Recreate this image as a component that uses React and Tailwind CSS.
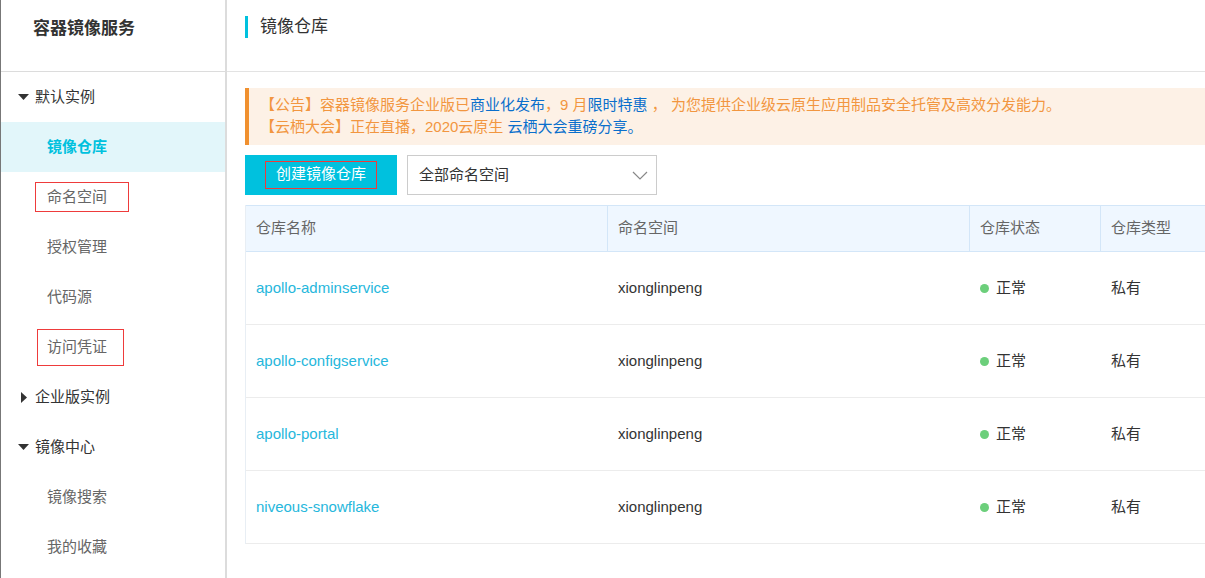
import React from 'react';

const font = { fontFamily: '"Liberation Sans", "Noto Sans CJK SC", sans-serif' };

const repos = [
  { name: 'apollo-adminservice', ns: 'xionglinpeng' },
  { name: 'apollo-configservice', ns: 'xionglinpeng' },
  { name: 'apollo-portal', ns: 'xionglinpeng' },
  { name: 'niveous-snowflake', ns: 'xionglinpeng' },
];

const CaretDown = () => (
  <svg width="11" height="6" viewBox="0 0 11 6" className="mr-[6px]">
    <path d="M0 0 L11 0 L5.5 6 Z" fill="#333" />
  </svg>
);

const CaretRight = () => (
  <svg width="6" height="11" viewBox="0 0 6 11" className="ml-[3px] mr-[8px]">
    <path d="M0 0 L6 5.5 L0 11 Z" fill="#333" />
  </svg>
);

const Group = ({ open, label }) => (
  <div className="h-[50px] flex items-center pl-[17px] text-[15px] text-[#333]">
    {open ? <CaretDown /> : <CaretRight />}
    <span>{label}</span>
  </div>
);

const Item = ({ children, active }) => (
  <div
    className={
      'h-[50px] flex items-center pl-[46px] text-[15px] ' +
      (active ? 'bg-[#e2f6fa] text-[#00c1de] font-bold' : 'text-[#666]')
    }
  >
    {children}
  </div>
);

export default function App() {
  return (
    <div className="flex w-[1205px] h-[578px] overflow-hidden bg-white" style={font}>
      {/* sidebar */}
      <div className="w-[227px] shrink-0 border-l border-l-[#777] border-r-2 border-r-[#dcdcdc] flex flex-col">
        <div className="h-[72px] shrink-0 border-b border-[#dcdcdc] flex items-center pl-[32px] pb-[14px]">
          <span className="text-[17px] font-bold text-[#333]">容器镜像服务</span>
        </div>
        <Group open label="默认实例" />
        <Item active>镜像仓库</Item>
        <Item>
          <span className="-ml-[12px] pl-[11px] pr-[21px] h-[30px] flex items-center border border-[#ee3b3b]">命名空间</span>
        </Item>
        <Item>授权管理</Item>
        <Item>代码源</Item>
        <Item>
          <span className="-ml-[10px] pl-[9px] pr-[16px] h-[37px] flex items-center border border-[#ee3b3b]">访问凭证</span>
        </Item>
        <Group label="企业版实例" />
        <Group open label="镜像中心" />
        <Item>镜像搜索</Item>
        <Item>我的收藏</Item>
      </div>

      {/* main */}
      <div className="flex-1 overflow-hidden">
        <div className="h-[72px] border-b border-[#e3e3e3] pt-[16px] pl-[18px] w-[1200px]">
          <div className="flex items-center border-l-[3px] border-[#00c1de] h-[22px] pl-[12px]">
            <span className="text-[17px] text-[#333]">镜像仓库</span>
          </div>
        </div>

        <div className="pl-[18px] pt-[16px] w-[1200px]">
          <div className="h-[57px] bg-[#fdf1e6] border-l-4 border-[#f0902f] pl-[11px] pt-[6px] text-[15px] leading-[22px] text-[#f29640] whitespace-nowrap">
            <div>
              【公告】容器镜像服务企业版已<span className="text-[#0a6fcc]">商业化发布</span>，9 月<span className="text-[#0a6fcc]">限时特惠</span> ， 为您提供企业级云原生应用制品安全托管及高效分发能力。
            </div>
            <div>
              【云栖大会】正在直播，2020云原生 <span className="text-[#0a6fcc]">云栖大会重磅分享。</span>
            </div>
          </div>

          <div className="flex gap-[10px] mt-[10px]">
            <button className="w-[152px] h-[40px] bg-[#00c1de] flex items-center justify-center">
              <span className="h-[28px] px-[10px] flex items-center border border-[#ee3b3b] text-white text-[15px] -mt-[1px]">创建镜像仓库</span>
            </button>
            <div className="w-[250px] h-[40px] border border-[#cccccc] flex items-center justify-between pl-[11px] pr-[8px]">
              <span className="text-[15px] text-[#333]">全部命名空间</span>
              <svg width="16" height="9" viewBox="0 0 16 9">
                <path d="M1 1 L8 8 L15 1" fill="none" stroke="#888" strokeWidth="1.2" />
              </svg>
            </div>
          </div>

          <div className="mt-[10px] border-l border-[#e8eef4] w-[1100px]">
            <div className="flex h-[47px] bg-[#eff7ff] border border-l-0 border-[#d3e6f8] text-[15px] text-[#666]">
              <div className="w-[362px] border-r border-[#d3e6f8] flex items-center pl-[10px]">仓库名称</div>
              <div className="w-[362px] border-r border-[#d3e6f8] flex items-center pl-[10px]">命名空间</div>
              <div className="w-[131px] border-r border-[#d3e6f8] flex items-center pl-[10px]">仓库状态</div>
              <div className="w-[131px] border-r border-[#d3e6f8] flex items-center pl-[10px]">仓库类型</div>
              <div className="flex-1"></div>
            </div>
            {repos.map((r) => (
              <div key={r.name} className="flex h-[73px] border-b border-[#ececec] text-[15px]">
                <div className="w-[362px] flex items-center pl-[10px] text-[#26b7dc]">{r.name}</div>
                <div className="w-[362px] flex items-center pl-[10px] text-[#333]">{r.ns}</div>
                <div className="w-[131px] flex items-center pl-[10px] text-[#333]">
                  <span className="w-[9px] h-[9px] rounded-full bg-[#6ccf7b] mr-[7px]"></span>
                  正常
                </div>
                <div className="w-[131px] flex items-center pl-[10px] text-[#333]">私有</div>
                <div className="flex-1"></div>
              </div>
            ))}
          </div>
        </div>
      </div>
    </div>
  );
}
